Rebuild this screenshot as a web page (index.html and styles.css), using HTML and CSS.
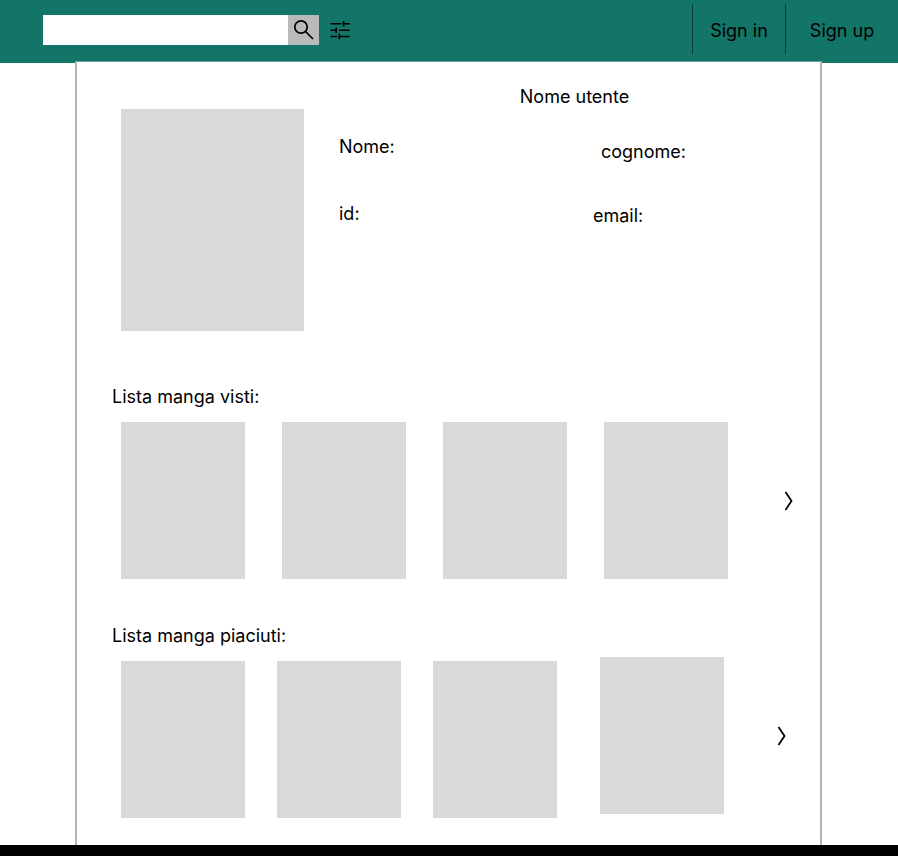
FILE: index.html
```html
<!DOCTYPE html>
<html lang="it">
<head>
<meta charset="utf-8">
<meta name="viewport" content="width=device-width, initial-scale=1">
<title>Profilo utente</title>
<link rel="stylesheet" href="styles.css">
</head>
<body>
<header class="topbar">
  <form class="search" role="search">
    <input class="search-input" type="search" aria-label="Cerca">
    <button class="search-button" type="submit" aria-label="Cerca">
      <svg width="31" height="30" viewBox="0 0 31 30" fill="none" stroke="#000" stroke-width="1.7"><circle cx="13" cy="12" r="6.2"/><path d="M17.5 16.5 25 24"/></svg>
    </button>
    <button class="filter-button" type="button" aria-label="Filtri">
      <svg width="20" height="20" viewBox="0 0 20 20" fill="none" stroke="#000" stroke-width="1.6"><path d="M.5 3.8h11M13.6 1v5.6M13.6 3.8h6M.5 10.2h5.5M6.2 7.4V13M9 10.2h10.6M.5 16.5h6.7M9.3 13.7v5.6M9.3 16.5h10.3"/></svg>
    </button>
  </form>
  <nav class="account">
    <a class="account-link" href="#">Sign in</a>
    <a class="account-link account-link-wide" href="#">Sign up</a>
  </nav>
</header>
<main class="page">
  <section class="profile">
    <div class="photo"></div>
    <div class="details">
      <h1 class="username">Nome utente</h1>
      <div class="fields">
        <div class="field-column">
          <p>Nome:</p>
          <p>id:</p>
        </div>
        <div class="field-column field-column-end">
          <p class="indented">cognome:</p>
          <p>email:</p>
        </div>
      </div>
    </div>
  </section>
  <section class="shelf">
    <h2>Lista manga visti:</h2>
    <div class="shelf-row">
      <div class="covers"><div class="cover"></div><div class="cover"></div><div class="cover"></div></div>
      <div class="shelf-tail">
        <div class="cover"></div>
        <button class="next" type="button" aria-label="Avanti"><svg width="10" height="20" viewBox="0 0 10 20" fill="none" stroke="#000" stroke-width="1.8"><path d="M1.5 1 7.5 10 1.5 19"/></svg></button>
      </div>
    </div>
  </section>
  <section class="shelf shelf-compact">
    <h2>Lista manga piaciuti:</h2>
    <div class="shelf-row">
      <div class="covers"><div class="cover"></div><div class="cover"></div><div class="cover"></div></div>
      <div class="shelf-tail">
        <div class="cover"></div>
        <button class="next" type="button" aria-label="Avanti"><svg width="10" height="20" viewBox="0 0 10 20" fill="none" stroke="#000" stroke-width="1.8"><path d="M1.5 1 7.5 10 1.5 19"/></svg></button>
      </div>
    </div>
  </section>
</main>
<footer class="bottom"></footer>
</body>
</html>
```
FILE: styles.css
```css
* { box-sizing: border-box; }
body {
  margin: 0;
  min-height: 100vh;
  display: flex;
  flex-direction: column;
  background: #fff;
  color: #000;
  font: 400 18px/24px Inter, "Liberation Sans", sans-serif;
}
h1, h2, p { margin: 0; font: inherit; }
button { padding: 0; border: 0; background: none; color: inherit; cursor: pointer; }
svg { display: block; }

.topbar {
  display: flex;
  justify-content: space-between;
  height: 63px;
  padding-left: 43px;
  background: #137468;
}
.search { display: flex; align-items: center; height: 60px; }
.search-input {
  width: 245px;
  height: 30px;
  padding: 0 8px;
  border: 0;
  border-radius: 0;
  outline: 0;
  background: #fff;
  font: inherit;
  appearance: none;
}
.search-button { height: 30px; background: #bababa; }
.filter-button { margin-left: 11px; }

.account { display: flex; padding-top: 4px; }
.account-link {
  display: flex;
  align-items: center;
  justify-content: center;
  width: 93px;
  height: 50px;
  padding-top: 3px;
  border-left: 1px solid #0a3b35;
  color: #000;
  text-decoration: none;
}
.account-link-wide { width: 113px; }

.page {
  flex: 1;
  margin: -2px 76px 0 75px;
  padding: 23px 26px 27px 35px;
  border: 2px solid #b4b4b4;
  border-top: 1px solid #6b9f98;
  border-bottom: 0;
  background: #fff;
}

.profile { display: flex; padding-left: 9px; }
.photo {
  flex: none;
  width: 183px;
  height: 222px;
  margin: 24px 35px 0 0;
  background: #d9d9d9;
}
.details { flex: 1; }
.username { padding-left: 16px; text-align: center; }
.fields { display: grid; grid-template-columns: 254px 1fr; margin-top: 26px; }
.field-column { display: flex; flex-direction: column; gap: 43px; }
.field-column-end { gap: 40px; padding-top: 5px; }
.indented { padding-left: 8px; }

.shelf { margin-top: 54px; }
.shelf-row {
  display: flex;
  align-items: flex-end;
  gap: 37px;
  margin-top: 13px;
  padding-left: 9px;
}
.covers { display: flex; gap: 37px; }
.cover { width: 124px; height: 157px; background: #d9d9d9; }
.shelf-tail { display: flex; align-items: center; gap: 56px; }

.shelf-compact { margin-top: 45px; }
.shelf-compact .shelf-row { gap: 43px; margin-top: 9px; }
.shelf-compact .covers { gap: 32px; }
.shelf-compact .shelf-tail { gap: 53px; padding-bottom: 4px; }

.bottom { height: 11px; background: #000; }
```
